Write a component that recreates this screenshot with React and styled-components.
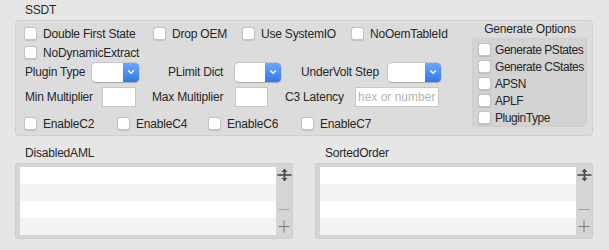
import React from 'react';
import styled, { createGlobalStyle } from 'styled-components';

const Global = createGlobalStyle`
  html, body {
    margin: 0;
    background: #e6e6e6;
  }
  body {
    font-family: 'Liberation Sans', Arial, sans-serif;
    font-size: 12px;
    letter-spacing: -0.2px;
    color: #262626;
  }
`;

const Page = styled.div`
  width: 609px;
  height: 250px;
  padding: 0 16px 0 15px;
  box-sizing: border-box;
`;

const GroupTitle = styled.div`
  height: 20px;
  line-height: 20px;
  padding-left: 10px;
  box-sizing: border-box;
`;

const GroupBox = styled.div`
  display: flex;
  height: 116px;
  box-sizing: border-box;
  background: #dcdcdc;
  border: 1px solid #d2d2d2;
  border-radius: 4px;
`;

const LeftCol = styled.div`
  flex: 1;
  padding: 3px 0 0 8px;
`;

const Row = styled.div`
  display: flex;
  align-items: center;
  height: ${p => p.$h || 19}px;
  margin-top: ${p => p.$mt || 0}px;
`;

const CheckItem = styled.label`
  display: flex;
  align-items: center;
  gap: ${p => p.$gap || 6}px;
  width: ${p => (p.$w ? `${p.$w}px` : 'auto')};
  height: ${p => p.$h || 19}px;
  white-space: nowrap;
`;

const Box = styled.span`
  width: 11px;
  height: 11px;
  flex: none;
  background: #fff;
  border: 0.5px solid #c4c4c4;
  border-radius: 3px;
  box-shadow: 0 0.5px 1px rgba(0, 0, 0, 0.12);
`;

const Label = styled.span`
  width: ${p => p.$w}px;
  margin-left: ${p => p.$ml || 0}px;
  flex: none;
  white-space: nowrap;
`;

const Popup = styled.div`
  display: flex;
  width: ${p => p.$w}px;
  height: 19px;
  flex: none;
  border-radius: 4px;
  overflow: hidden;
  background: #fff;
  box-shadow: 0 0 0 0.5px rgba(0, 0, 0, 0.18), 0 0.5px 1px rgba(0, 0, 0, 0.15);
`;

const PopupField = styled.div`
  flex: 1;
`;

const PopupArrow = styled.div`
  width: 16px;
  display: flex;
  align-items: center;
  justify-content: center;
  background: linear-gradient(#69a8fb, #2f78ea);
`;

const Input = styled.div`
  width: ${p => p.$w}px;
  height: 20px;
  flex: none;
  box-sizing: border-box;
  background: #fff;
  border: 1px solid #c8c8c8;
  padding: 0 0 0 2px;
  line-height: 18px;
  color: #b4b4b4;
  font-size: 12px;
  letter-spacing: 0;
  white-space: nowrap;
  overflow: hidden;
`;

const RightCol = styled.div`
  width: 115px;
  margin-right: 5px;
  display: flex;
  flex-direction: column;
`;

const SideTitle = styled.div`
  height: 17px;
  line-height: 17px;
  text-align: center;
  padding-left: 1px;
`;

const SideBox = styled.div`
  height: 89px;
  box-sizing: border-box;
  background: #d3d3d3;
  border: 1px solid #cecece;
  border-radius: 3px;
  padding: 2px 0 0 5px;
  letter-spacing: -0.45px;
`;

const Lists = styled.div`
  display: flex;
  gap: 22px;
  margin-top: 7px;
`;

const ListGroup = styled.div`
  width: 278px;
`;

const ListFrame = styled.div`
  display: flex;
  height: 76px;
  box-sizing: border-box;
  background: #d5d5d5;
  border: 1px solid #cfcfcf;
  border-radius: 2px;
  padding: 3px 0 3px 4px;
`;

const ListBody = styled.div`
  width: 256px;
  display: flex;
  flex-direction: column;
`;

const ListRow = styled.div`
  height: 17px;
  background: ${p => (p.$alt ? '#f3f3f3' : '#ffffff')};
`;

const ListTools = styled.div`
  flex: 1;
  display: flex;
  flex-direction: column;
  align-items: center;
  padding-top: 1px;
`;

const ToolGap = styled.div`
  flex: 1;
`;

const ToolSpace = styled.div`
  height: ${p => p.$h}px;
`;

const Chevron = () => (
  <svg width="8" height="6" viewBox="0 0 8 6">
    <path d="M1.5 1.8 L4 4.2 L6.5 1.8" fill="none" stroke="#fff" strokeWidth="1.4" strokeLinecap="round" strokeLinejoin="round" />
  </svg>
);

const MoveIcon = () => (
  <svg width="15" height="14" viewBox="0 0 15 14">
    <path d="M0.5 7 H14.5" stroke="#4a4a4a" strokeWidth="1.6" />
    <path d="M7.5 1.5 V12.5" stroke="#4a4a4a" strokeWidth="1.8" />
    <path d="M4.5 4 L7.5 0.8 L10.5 4 Z" fill="#4a4a4a" />
    <path d="M4.5 10 L7.5 13.2 L10.5 10 Z" fill="#4a4a4a" />
  </svg>
);

const MinusIcon = () => (
  <svg width="12" height="3" viewBox="0 0 12 3">
    <path d="M0.5 1.5 H11.5" stroke="#a8a8a8" strokeWidth="1" />
  </svg>
);

const PlusIcon = () => (
  <svg width="12" height="13" viewBox="0 0 12 13">
    <path d="M0.5 6.5 H11.5 M6 0.5 V12.5" stroke="#7a7a7a" strokeWidth="1" />
  </svg>
);

const Check = ({ children, w, h, gap }) => (
  <CheckItem $w={w} $h={h} $gap={gap}>
    <Box />
    {children}
  </CheckItem>
);

const PopupButton = ({ w }) => (
  <Popup $w={w}>
    <PopupField />
    <PopupArrow>
      <Chevron />
    </PopupArrow>
  </Popup>
);

const ListPanel = ({ title }) => (
  <ListGroup>
    <GroupTitle>{title}</GroupTitle>
    <ListFrame>
      <ListBody>
        <ListRow />
        <ListRow $alt />
        <ListRow />
        <ListRow $alt />
      </ListBody>
      <ListTools>
        <MoveIcon />
        <ToolGap />
        <MinusIcon />
        <ToolSpace $h={9} />
        <PlusIcon />
        <ToolSpace $h={2} />
      </ListTools>
    </ListFrame>
  </ListGroup>
);

export default function App() {
  return (
    <Page>
      <Global />
      <GroupTitle>SSDT</GroupTitle>
      <GroupBox>
        <LeftCol>
          <Row>
            <Check w={129}>Double First State</Check>
            <Check w={89}>Drop OEM</Check>
            <Check w={109}>Use SystemIO</Check>
            <Check>NoOemTableId</Check>
          </Row>
          <Row>
            <Check>NoDynamicExtract</Check>
          </Row>
          <Row $h={20}>
            <Label $w={67} $ml={1}>Plugin Type</Label>
            <PopupButton w={47} />
            <Label $w={67} $ml={29}>PLimit Dict</Label>
            <PopupButton w={46} />
            <Label $w={87} $ml={20}>UnderVolt Step</Label>
            <PopupButton w={53} />
          </Row>
          <Row $h={20} $mt={5}>
            <Label $w={77} $ml={1}>Min Multiplier</Label>
            <Input $w={34} />
            <Label $w={83} $ml={16}>Max Multiplier</Label>
            <Input $w={33} />
            <Label $w={70} $ml={17}>C3 Latency</Label>
            <Input $w={84}>hex or number</Input>
          </Row>
          <Row $mt={7}>
            <Check w={93}>EnableC2</Check>
            <Check w={91}>EnableC4</Check>
            <Check w={93}>EnableC6</Check>
            <Check>EnableC7</Check>
          </Row>
        </LeftCol>
        <RightCol>
          <SideTitle>Generate Options</SideTitle>
          <SideBox>
            <Check h={17} gap={4}>Generate PStates</Check>
            <Check h={17} gap={4}>Generate CStates</Check>
            <Check h={17} gap={4}>APSN</Check>
            <Check h={17} gap={4}>APLF</Check>
            <Check h={17} gap={4}>PluginType</Check>
          </SideBox>
        </RightCol>
      </GroupBox>
      <Lists>
        <ListPanel title="DisabledAML" />
        <ListPanel title="SortedOrder" />
      </Lists>
    </Page>
  );
}
